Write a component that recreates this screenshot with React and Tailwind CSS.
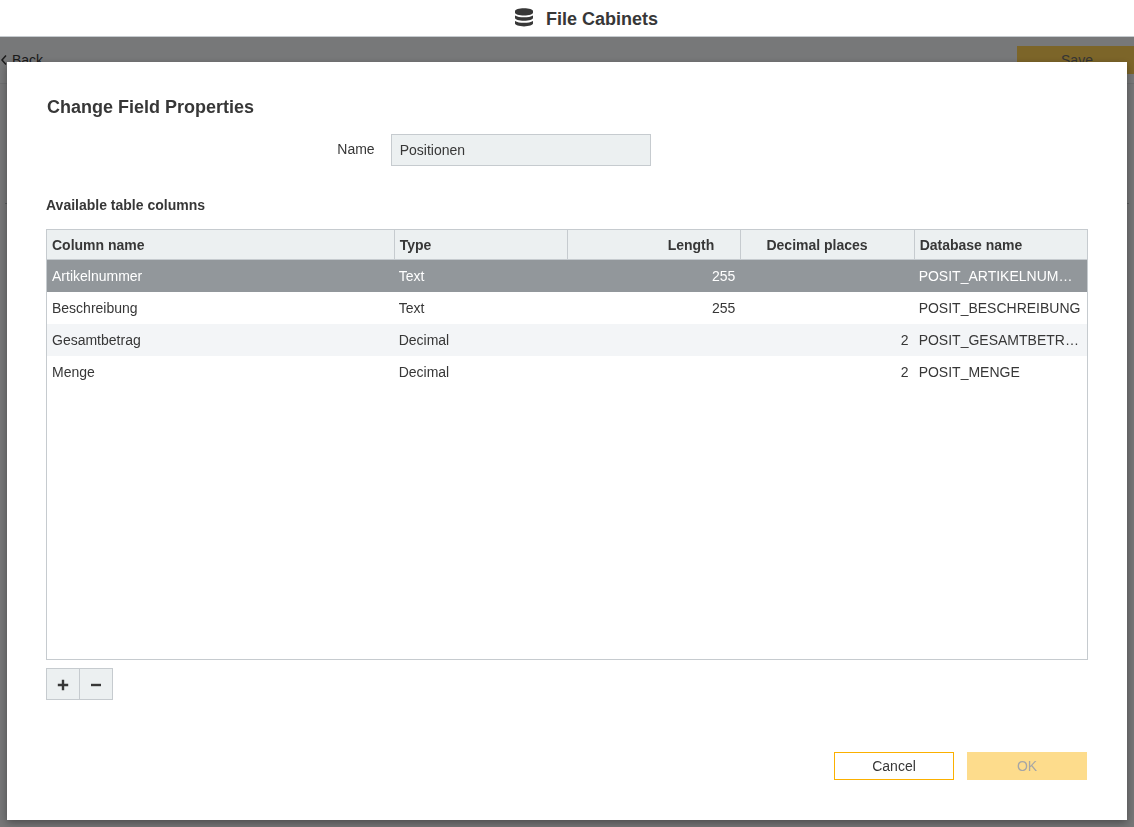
import { useState } from 'react';

const initialColumns = [
  { name: 'Artikelnummer', type: 'Text', length: 255, decimals: null, dbName: 'POSIT_ARTIKELNUMMER' },
  { name: 'Beschreibung', type: 'Text', length: 255, decimals: null, dbName: 'POSIT_BESCHREIBUNG' },
  { name: 'Gesamtbetrag', type: 'Decimal', length: null, decimals: 2, dbName: 'POSIT_GESAMTBETRAG' },
  { name: 'Menge', type: 'Decimal', length: null, decimals: 2, dbName: 'POSIT_MENGE' },
];

function DatabaseIcon() {
  return (
    <svg className="w-[18px] h-5 text-[#373737]" viewBox="0 0 18 20" fill="currentColor" aria-hidden="true">
      <path d="M0 3C0 1.4 4 .2 9 .2S18 1.4 18 3V4.8C18 6.4 14 7.5 9 7.5S0 6.4 0 4.8Z" />
      <path d="M0 7.5C2 8.8 5.4 9.3 9 9.3S16 8.8 18 7.5V10C18 11.6 14 12.8 9 12.8S0 11.6 0 10Z" />
      <path d="M0 12.9C2 14.2 5.4 14.7 9 14.7S16 14.2 18 12.9V15.6C18 17.2 14 18.4 9 18.4S0 17.2 0 15.6Z" />
    </svg>
  );
}

function ColumnTable({ columns, selected, onSelect }) {
  const rowStyle = (i) => {
    if (i === selected) return 'bg-[#92979b] text-white';
    return i % 2 === 0 ? 'bg-[#f3f5f7]' : 'bg-white';
  };

  return (
    <div className="flex-1 border border-[#c6cbcf]">
      <table className="w-full table-fixed border-separate border-spacing-0 text-left" aria-labelledby="columns-title">
        <thead>
          <tr className="h-[30px] bg-[#ecf0f1]">
            <th className="w-1/3 px-[5px] border-b border-[#c6cbcf]">Column name</th>
            <th className="w-1/6 px-[5px] border-b border-l border-[#c6cbcf]">Type</th>
            <th className="w-1/6 pr-[26px] text-right border-b border-l border-[#c6cbcf]">Length</th>
            <th className="w-1/6 pr-[46px] text-right border-b border-l border-[#c6cbcf]">Decimal places</th>
            <th className="w-1/6 px-[5px] border-b border-l border-[#c6cbcf]">Database name</th>
          </tr>
        </thead>
        <tbody>
          {columns.map((col, i) => (
            <tr key={col.dbName} onClick={() => onSelect(i)} className={`h-8 ${rowStyle(i)}`}>
              <td className="px-[5px] truncate">{col.name}</td>
              <td className="px-[5px] truncate">{col.type}</td>
              <td className="px-[5px] text-right">{col.length}</td>
              <td className="px-[5px] text-right">{col.decimals}</td>
              <td className="px-[5px] truncate">{col.dbName}</td>
            </tr>
          ))}
        </tbody>
      </table>
    </div>
  );
}

export default function App() {
  const [columns, setColumns] = useState(initialColumns);
  const [selected, setSelected] = useState(0);

  const addColumn = () => {
    const n = columns.length + 1;
    setColumns([...columns, { name: `Feld ${n}`, type: 'Text', length: 255, decimals: null, dbName: `POSIT_FELD_${n}` }]);
  };

  const removeColumn = () => {
    setColumns(columns.filter((_, i) => i !== selected));
    setSelected(0);
  };

  return (
    <div className="min-h-screen flex flex-col overflow-hidden bg-[#ecedef] font-['Liberation_Sans',Arial,sans-serif] text-sm text-[#373737]">
      {/* Page header */}
      <header className="h-[37px] flex items-center justify-center gap-[13px] pl-[39px] bg-white border-b border-[#c6cbcf]">
        <DatabaseIcon />
        <h1 className="pt-0.5 text-lg font-bold">File Cabinets</h1>
      </header>

      {/* Toolbar behind the dialog */}
      <div className="h-[47px] flex items-center justify-between bg-[#eff0f2] border-b border-[#dcdee0]">
        <a href="#back" className="flex items-center gap-1">
          <svg className="w-2 h-3" viewBox="0 0 8 12" fill="none" stroke="currentColor" strokeWidth={1.5} aria-hidden="true">
            <path d="M6 1.5L2 6l4 4.5" />
          </svg>
          Back
        </a>
        <button className="w-[120px] h-7 -mr-[3px] bg-[#f8ca52] text-[#6b6b6b]">Save</button>
      </div>

      {/* Field section behind the dialog, only its divider shows at the sides */}
      <div className="h-[120px] mx-[5px] border-b border-[#b4b7ba]" />

      {/* Dialog */}
      <div className="fixed inset-x-0 bottom-0 top-[37px] flex flex-col px-[7px] pt-[25px] pb-[7px] bg-black/50">
        <div
          role="dialog"
          aria-labelledby="dialog-title"
          className="flex-1 flex flex-col px-[39px] pt-[33px] pb-10 bg-white shadow-[0_3px_8px_rgba(0,0,0,0.35)]"
        >
          <h2 id="dialog-title" className="pl-px text-lg leading-6 font-bold">Change Field Properties</h2>

          <div className="mt-[15px] flex items-center justify-center gap-4 pr-[146px]">
            <label htmlFor="field-name" className="pb-0.5">Name</label>
            <input
              id="field-name"
              type="text"
              defaultValue="Positionen"
              readOnly
              className="w-[260px] h-8 px-2 bg-[#ecf0f1] border border-[#c6cbcf] outline-none"
            />
          </div>

          <h3 id="columns-title" className="mt-[29px] mb-[14px] font-bold">Available table columns</h3>
          <ColumnTable columns={columns} selected={selected} onSelect={setSelected} />

          <div className="mt-2 flex">
            <button
              onClick={addColumn}
              aria-label="Add column"
              className="w-[34px] h-8 pt-0.5 flex items-center justify-center bg-[#ecf0f1] border border-[#c6cbcf]"
            >
              <svg className="w-3 h-3" viewBox="0 0 12 12" stroke="currentColor" strokeWidth={2.4} aria-hidden="true">
                <path d="M6 .8v10.4M.8 6h10.4" />
              </svg>
            </button>
            <button
              onClick={removeColumn}
              aria-label="Remove column"
              className="w-[34px] h-8 -ml-px pt-0.5 flex items-center justify-center bg-[#ecf0f1] border border-[#c6cbcf]"
            >
              <svg className="w-3 h-3" viewBox="0 0 12 12" stroke="currentColor" strokeWidth={2.4} aria-hidden="true">
                <path d="M1 6h10" />
              </svg>
            </button>
          </div>

          <div className="mt-[52px] pr-px flex justify-end gap-[13px]">
            <button className="w-[120px] h-7 bg-white border border-[#fbb000]">Cancel</button>
            <button disabled className="w-[120px] h-7 bg-[#fddc8c] text-[#a6a6a6]">OK</button>
          </div>
        </div>
      </div>
    </div>
  );
}
